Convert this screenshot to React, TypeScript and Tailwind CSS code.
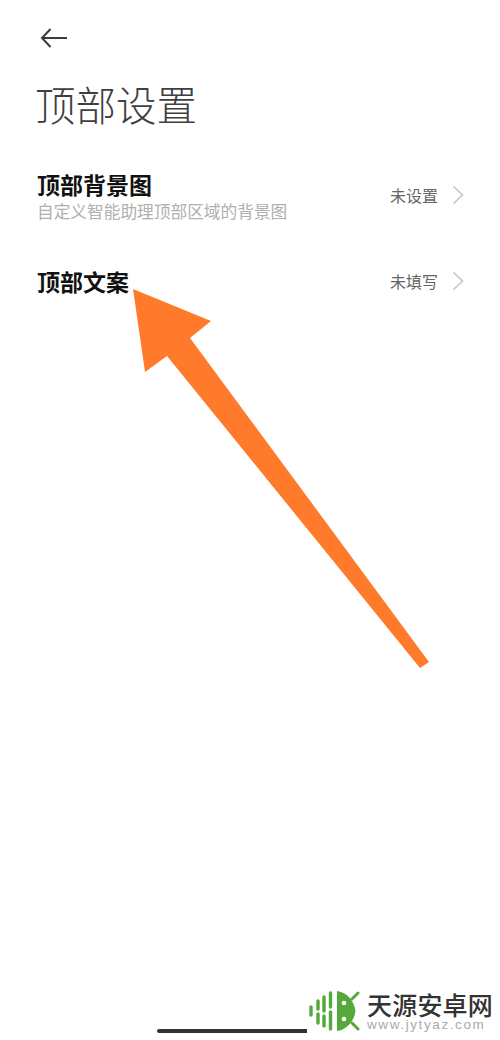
const cjk = { fontFamily: '"Noto Sans CJK SC", "Noto Sans", sans-serif' }

function Chevron() {
  return (
    <svg width="12" height="20" viewBox="0 0 12 20" fill="none" stroke="#c4c4c4" strokeWidth="1.6" className="ml-[14px]">
      <path d="M1.5 1.5 10.5 10 1.5 18.5" />
    </svg>
  )
}

function Row({ title, subtitle, value, className }: { title: string; subtitle?: string; value: string; className: string }) {
  return (
    <div className={`flex items-center justify-between pl-[37px] pr-[36px] ${className}`}>
      <div>
        <div className="text-[23px] leading-[30px] font-bold text-[#111]">{title}</div>
        {subtitle ? <div className="mt-[2px] text-[16.7px] leading-[20px] text-[#b0b0b0]">{subtitle}</div> : null}
      </div>
      <div className="flex items-center">
        <span className="text-[16px] leading-[22px] text-[#666]">{value}</span>
        <Chevron />
      </div>
    </div>
  )
}

function LogoMark() {
  return (
    <svg width="52" height="42" viewBox="0 0 52 42" fill="none">
      <g stroke="#55a83a" strokeWidth="3.4" strokeLinecap="round">
        <path d="M3 17v8" />
        <path d="M10 11v8M10 24v9" />
        <path d="M16 7v14M16 26v10" />
        <path d="M22.500 3v14M22.500 22v17" />
      </g>
      <path d="M29 1c9 1 17 9 18.500 20-1.500 11-9.500 19-18.500 20z" fill="#55a83a" />
      <g stroke="#55a83a" strokeWidth="3" strokeLinecap="round">
        <path d="M44 9l6-6" />
        <path d="M44 33l6 6" />
      </g>
      <circle cx="36" cy="13" r="2.300" fill="#fff" />
      <circle cx="36" cy="29" r="2.300" fill="#fff" />
    </svg>
  )
}

export default function App() {
  return (
    <div className="relative flex h-[1040px] w-[500px] flex-col overflow-hidden bg-white" style={cjk}>
      <div className="pt-[27px] pl-[40px]">
        <svg width="28" height="22" viewBox="0 0 28 22" fill="none" stroke="#3c3c3c" strokeWidth="2">
          <path d="M10.500 2 2 11l8.500 9M2 11h25" />
        </svg>
      </div>
      <h1 className="mt-[25px] pl-[35px] text-[40.5px] leading-[60px] font-light text-[#3f3f3f]">顶部设置</h1>
      <Row className="mt-[35px]" title="顶部背景图" subtitle="自定义智能助理顶部区域的背景图" value="未设置" />
      <Row className="mt-[45px]" title="顶部文案" value="未填写" />

      <div className="mt-auto mb-[7px] ml-[157px] h-[4px] w-[150px] rounded-l-full bg-[#333]" />

      {/* annotation arrow drawn over the screenshot */}
      <svg className="absolute top-0 left-0" width="500" height="1040" viewBox="0 0 500 1040">
        <polygon points="133,289 211,321 190,338 429,662 420,668 167,356 145,372" fill="#ff7a2b" />
      </svg>

      {/* site watermark */}
      <div className="absolute top-[990px] left-[308px] flex items-center">
        <LogoMark />
        <div className="ml-[7px]">
          <div className="text-[25px] leading-[27px] font-medium tracking-[0.2px] text-[#333]">天源安卓网</div>
          <div className="text-[13.500px] leading-[14px] tracking-[1.6px] text-[#aaa]" style={{ fontFamily: '"Liberation Sans", sans-serif' }}>www.jytyaz.com</div>
        </div>
      </div>
    </div>
  )
}
